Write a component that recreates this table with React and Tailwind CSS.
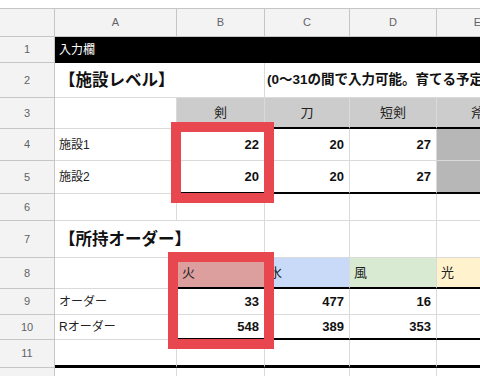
import React from "react";

const F = { fontFamily: '"Liberation Sans", Arial, "Noto Sans CJK JP", sans-serif' };

const base =
  "border-r border-b border-[#dadada] flex items-center overflow-hidden whitespace-nowrap";
const rh =
  "bg-[#f3f3f3] border-r border-b border-[#c6c6c6] text-[11px] text-[#5f6368] flex items-center justify-center";
const ch =
  "bg-[#f3f3f3] border-r border-b border-[#c6c6c6] text-[11px] text-[#5f6368] flex items-center justify-center";

function Num({ children, extra = "" }) {
  return (
    <div className={`${base} justify-end pr-[5px] text-[13px] font-bold text-[#111] ${extra}`}>
      {children}
    </div>
  );
}

export default function App() {
  return (
    <div className="relative w-[480px] h-[376px] overflow-hidden bg-white" style={F}>
      <div
        className="grid w-[560px]"
        style={{
          gridTemplateColumns: "55px 122px 88px 85px 87px 82px 41px",
          gridTemplateRows:
            "9px 28px 26px 35px 31px 32px 33px 27px 37px 31px 26px 25px 28px 30px",
        }}
      >
        {/* top strip */}
        <div className="col-span-7 bg-white border-b border-[#c6c6c6]" />

        {/* column headers */}
        <div className={ch} />
        <div className={ch}>A</div>
        <div className={ch}>B</div>
        <div className={ch}>C</div>
        <div className={ch}>D</div>
        <div className={ch}>E</div>
        <div className={ch}>F</div>

        {/* row 1 */}
        <div className={rh}>1</div>
        <div className="col-span-6 bg-black flex items-center pl-[4px] text-[12px] text-white">
          入力欄
        </div>

        {/* row 2 */}
        <div className={rh}>2</div>
        <div className={`${base} col-span-2 pl-[4px] text-[16.5px] font-bold text-[#111]`}>
          【施設レベル】
        </div>
        <div className={`${base} col-span-4 pl-[2px] text-[13.5px] font-bold text-[#111]`}>
          (0〜31の間で入力可能。育てる予定のない施設は0を入力)
        </div>

        {/* row 3 */}
        <div className={rh}>3</div>
        <div className={base} />
        <div className={`${base} justify-center bg-[#cccccc] text-[13px] text-[#222] border-b-2 border-b-black`}>剣</div>
        <div className={`${base} justify-center bg-[#cccccc] text-[13px] text-[#222] border-b-2 border-b-black`}>刀</div>
        <div className={`${base} justify-center bg-[#cccccc] text-[13px] text-[#222] border-b-2 border-b-black`}>短剣</div>
        <div className={`${base} justify-center bg-[#cccccc] text-[13px] text-[#222] border-b-2 border-b-black`}>斧</div>
        <div className={`${base} justify-center bg-[#cccccc] text-[13px] text-[#222] border-b-2 border-b-black`}>槍</div>

        {/* row 4 */}
        <div className={rh}>4</div>
        <div className={`${base} pl-[4px] text-[12px] text-[#222]`}>施設1</div>
        <Num>22</Num>
        <Num>20</Num>
        <Num>27</Num>
        <div className={`${base} bg-[#b7b7b7]`} />
        <div className={`${base} bg-[#b7b7b7]`} />

        {/* row 5 */}
        <div className={rh}>5</div>
        <div className={`${base} pl-[4px] text-[12px] text-[#222]`}>施設2</div>
        <Num extra="border-b-2 border-b-black">20</Num>
        <Num extra="border-b-2 border-b-black">20</Num>
        <Num extra="border-b-2 border-b-black">27</Num>
        <div className={`${base} bg-[#b7b7b7] border-b-2 border-b-black`} />
        <div className={`${base} bg-[#b7b7b7] border-b-2 border-b-black`} />

        {/* row 6 */}
        <div className={rh}>6</div>
        <div className={base} />
        <div className={base} />
        <div className={base} />
        <div className={base} />
        <div className={base} />
        <div className={base} />

        {/* row 7 */}
        <div className={rh}>7</div>
        <div className={`${base} col-span-2 pl-[4px] text-[16.5px] font-bold text-[#111]`}>
          【所持オーダー】
        </div>
        <div className={base} />
        <div className={base} />
        <div className={base} />
        <div className={base} />

        {/* row 8 */}
        <div className={rh}>8</div>
        <div className={base} />
        <div className={`${base} pl-[5px] bg-[#dd9e9e] text-[13px] text-[#222] border-b-2 border-b-black`}>火</div>
        <div className={`${base} pl-[4px] bg-[#c9daf8] text-[13px] text-[#222] border-b-2 border-b-black`}>水</div>
        <div className={`${base} pl-[4px] bg-[#d9ead3] text-[13px] text-[#222] border-b-2 border-b-black`}>風</div>
        <div className={`${base} pl-[4px] bg-[#fff2cc] text-[13px] text-[#222] border-b-2 border-b-black`}>光</div>
        <div className={`${base} pl-[4px] bg-[#d9d2e9] text-[13px] text-[#222] border-b-2 border-b-black`}>闇</div>

        {/* row 9 */}
        <div className={rh}>9</div>
        <div className={`${base} pl-[4px] text-[12px] text-[#222]`}>オーダー</div>
        <Num>33</Num>
        <Num>477</Num>
        <Num>16</Num>
        <div className={base} />
        <div className={base} />

        {/* row 10 */}
        <div className={rh}>10</div>
        <div className={`${base} pl-[4px] text-[12px] text-[#222]`}>Rオーダー</div>
        <Num extra="border-b-2 border-b-black">548</Num>
        <Num extra="border-b-2 border-b-black">389</Num>
        <Num extra="border-b-2 border-b-black">353</Num>
        <div className={`${base} border-b-2 border-b-black`} />
        <div className={`${base} border-b-2 border-b-black`} />

        {/* row 11 */}
        <div className={rh}>11</div>
        <div className={`${base} border-b-[3px] border-b-black`} />
        <div className={`${base} border-b-[3px] border-b-black`} />
        <div className={`${base} border-b-[3px] border-b-black`} />
        <div className={`${base} border-b-[3px] border-b-black`} />
        <div className={`${base} border-b-[3px] border-b-black`} />
        <div className={`${base} border-b-[3px] border-b-black`} />

        {/* row 12 */}
        <div className={rh}>12</div>
        <div className={base} />
        <div className={base} />
        <div className={base} />
        <div className={base} />
        <div className={base} />
        <div className={base} />
      </div>

      {/* red annotation rectangles */}
      <div className="absolute left-[171px] top-[122px] w-[103px] h-[81px] border-[10px] border-[#e9474f]" />
      <div className="absolute left-[168px] top-[252px] w-[106px] h-[97px] border-[10px] border-[#e9474f]" />
    </div>
  );
}
